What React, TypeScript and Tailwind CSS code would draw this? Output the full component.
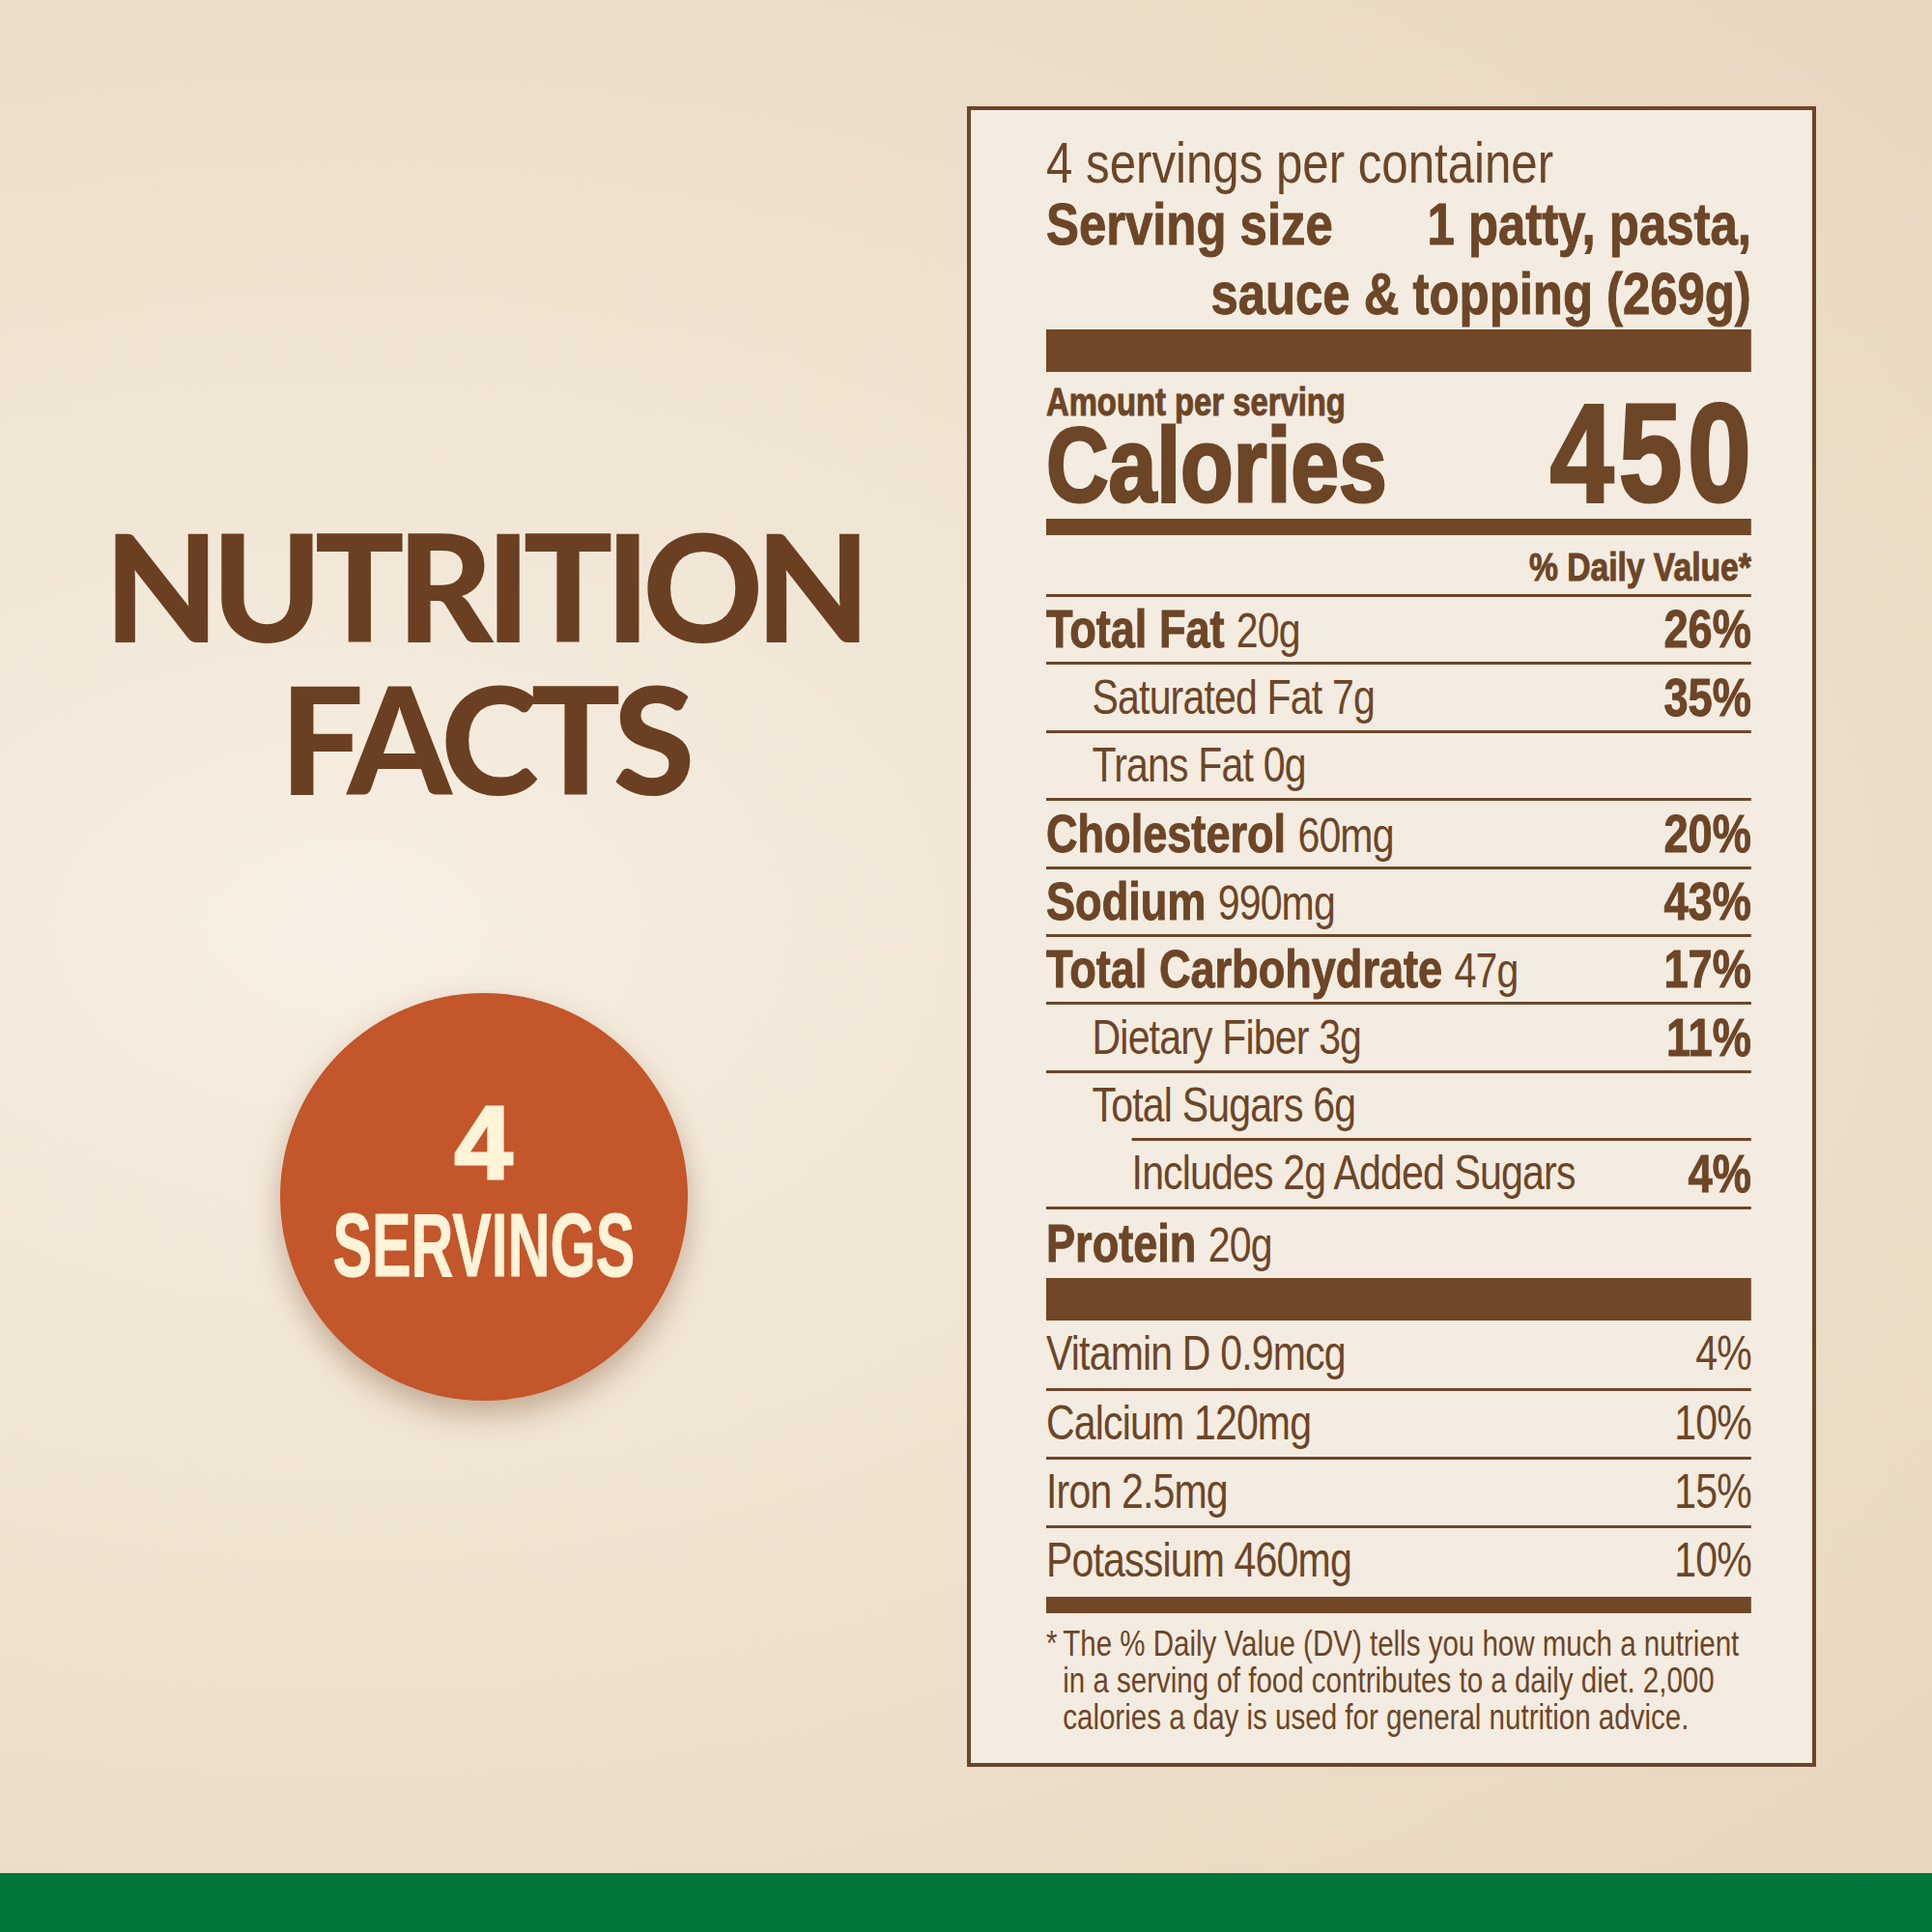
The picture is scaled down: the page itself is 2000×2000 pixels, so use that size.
type Nutrient = {
  name: string;
  amount?: string;
  dv?: string;
  bold?: boolean;
  indent?: 0 | 1 | 2;
  h?: string;
};

const nutrients: Nutrient[] = [
  { name: "Total Fat", amount: "20g", dv: "26%", bold: true },
  { name: "Saturated Fat 7g", dv: "35%", indent: 1 },
  { name: "Trans Fat 0g", indent: 1 },
  { name: "Cholesterol", amount: "60mg", dv: "20%", bold: true },
  { name: "Sodium", amount: "990mg", dv: "43%", bold: true },
  { name: "Total Carbohydrate", amount: "47g", dv: "17%", bold: true },
  { name: "Dietary Fiber 3g", dv: "11%", indent: 1 },
  { name: "Total Sugars 6g", indent: 1 },
  { name: "Includes 2g Added Sugars", dv: "4%", indent: 2 },
  { name: "Protein", amount: "20g", bold: true, h: "h-[74px]" },
];

const vitamins = [
  { name: "Vitamin D 0.9mcg", dv: "4%", h: "h-[70px]" },
  { name: "Calcium 120mg", dv: "10%", h: "h-[71px] border-t-[3px]" },
  { name: "Iron 2.5mg", dv: "15%", h: "h-[71px] border-t-[3px]" },
  { name: "Potassium 460mg", dv: "10%", h: "h-[74px] border-t-[3px] pb-[4px]" },
];

const heavy = "font-bold [-webkit-text-stroke:1px_#6d4527]";

function NutrientRow({ n }: { n: Nutrient }) {
  return (
    <div
      className={`flex items-center justify-between border-t-[3px] border-[#6f4527] ${n.h ?? "h-[70.4px]"} ${
        n.indent === 2 ? "ml-[108px]" : ""
      }`}
    >
      <div className={`flex items-baseline ${n.indent === 1 ? "pl-[58px]" : ""}`}>
        {n.bold ? (
          <>
            <span className={`text-[55px] ${heavy}`}>{n.name}</span>
            <span className="ml-[15px] text-[50px] tracking-[-1px]">{n.amount}</span>
          </>
        ) : (
          <span className="text-[50px] tracking-[-1px]">{n.name}</span>
        )}
      </div>
      {n.dv && <span className={`text-[55px] ${heavy}`}>{n.dv}</span>}
    </div>
  );
}

export default function App() {
  return (
    <div className="flex h-[2000px] w-[2000px] flex-col bg-[radial-gradient(ellipse_at_18%_48%,#f7efe3_0%,#f0e4d2_40%,#eadbc5_75%,#e8d6bd_100%)]">
      <div className="flex flex-1">
        {/* left: heading + badge */}
        <div className="flex w-[1001px] flex-col items-center pt-[527px]">
          <h1 className="text-center font-['Lato',sans-serif] text-[154px] font-black leading-[158px] tracking-[-8px] text-[#6b3f22]">
            NUTRITION
            <br />
            FACTS
          </h1>
          <div className="mt-[185px] flex h-[422px] w-[422px] flex-col items-center justify-center rounded-full bg-[#c3562a] pb-[10px] text-[#fff3d8] shadow-[0_14px_30px_rgba(110,60,25,0.35)]">
            <span className="font-['Liberation_Sans',sans-serif] text-[108px] font-bold leading-[100px] [-webkit-text-stroke:3px_#fff3d8]">
              4
            </span>
            <span className="mt-[10px] scale-x-[0.66] font-['Liberation_Sans',sans-serif] text-[92px] font-bold leading-[92px] [-webkit-text-stroke:1px_#fff3d8]">
              SERVINGS
            </span>
          </div>
        </div>

        {/* right: label, Liberation Sans squeezed to a condensed face */}
        <div className="mt-[110px] h-[1719px] w-[879px] border-[4px] border-[#6f4527] bg-[#f4ece0] pl-[78px] pt-[24px] font-['Liberation_Sans',sans-serif] text-[#6d4527]">
          <div className="w-[890px] origin-top-left scale-x-[0.82] [&_div]:border-[#6f4527]">
            <p className="text-[60px] leading-[62px]">4 servings per container</p>
            <div className={`-mt-[4px] whitespace-nowrap ${heavy}`}>
              <div className="flex justify-between text-[62px] leading-[72px]">
                <span>Serving size</span>
                <span>1 patty, pasta,</span>
              </div>
              <p className="text-right text-[62px] leading-[72px]">sauce &amp; topping (269g)</p>
            </div>
            <div className="mt-[1px] h-[44px] bg-[#714726]" />
            <p className={`mt-[9px] text-[40px] leading-[44px] ${heavy}`}>Amount per serving</p>
            <div className="-mt-[41px] flex items-baseline justify-between font-bold leading-none [-webkit-text-stroke:3px_#6d4527]">
              <span className="text-[109px]">Calories</span>
              <span className="-mr-[6px] text-[145px] tracking-[6px]">450</span>
            </div>
            <div className="-mt-[5px] h-[17px] bg-[#714726]" />
            <p className={`mt-[11px] text-right text-[41px] leading-[44px] ${heavy}`}>% Daily Value*</p>
            <div className="mt-[6px]">
              {nutrients.map((n) => (
                <NutrientRow key={n.name} n={n} />
              ))}
            </div>
            <div className="h-[44px] bg-[#714726]" />
            {vitamins.map((v) => (
              <div key={v.name} className={`flex items-center justify-between text-[50px] tracking-[-1px] ${v.h}`}>
                <span>{v.name}</span>
                <span>{v.dv}</span>
              </div>
            ))}
            <div className="h-[17px] bg-[#714726]" />
            <div className="mt-[13px] flex text-[36px] leading-[38px]">
              <span className="w-[21px] shrink-0">*</span>
              <p>
                The % Daily Value (DV) tells you how much a nutrient
                <br />
                in a serving of food contributes to a daily diet. 2,000
                <br />
                calories a day is used for general nutrition advice.
              </p>
            </div>
          </div>
        </div>
      </div>
      <div className="h-[61px] bg-[#00773a]" />
    </div>
  );
}
